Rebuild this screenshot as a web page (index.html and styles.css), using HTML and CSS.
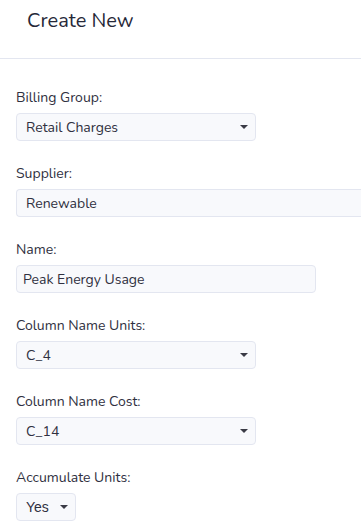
FILE: index.html
```html
<!DOCTYPE html>
<html lang="en">
<head>
  <meta charset="UTF-8">
  <title>Create New</title>
  <link rel="stylesheet" href="styles.css">
</head>
<body>
  <!-- Header -->
  <div class="modal-header">
    <h2 class="modal-title">Create New</h2>
  </div>

  <form class="modal-body">
    <div class="field">
      <label for="billingGroup">Billing Group:</label>
      <div class="select-wrap w-240">
        <select id="billingGroup">
          <option>Retail Charges</option>
        </select>
      </div>
    </div>

    <div class="field">
      <label for="supplier">Supplier:</label>
      <input type="text" id="supplier" class="input-wide" value="Renewable" readonly>
    </div>

    <div class="field">
      <label for="name">Name:</label>
      <input type="text" id="name" class="input-name" value="Peak Energy Usage">
    </div>

    <div class="field">
      <label for="colUnits">Column Name Units:</label>
      <div class="select-wrap w-240">
        <select id="colUnits">
          <option>C_4</option>
        </select>
      </div>
    </div>

    <div class="field">
      <label for="colCost">Column Name Cost:</label>
      <div class="select-wrap w-240">
        <select id="colCost">
          <option>C_14</option>
        </select>
      </div>
    </div>

    <div class="field">
      <label for="accumulate">Accumulate Units:</label>
      <div class="select-wrap w-60">
        <select id="accumulate" class="select-small">
          <option>Yes</option>
          <option>No</option>
        </select>
      </div>
    </div>
  </form>
</body>
</html>
```

FILE: styles.css
```css
body {
  font-family: "Nunito", "Lato", "Open Sans", sans-serif;
  color: #2f3040;
  margin: 0;
  overflow: hidden;
  background: #fff;
}
.modal-header {
  height: 58px;
  border-bottom: 1px solid #e3e6f0;
  padding: 0 27px;
}
.modal-title {
  margin: 0;
  padding-top: 8px;
  font-size: 20px;
  font-weight: 400;
  line-height: 26px;
  color: #262838;
}
.modal-body {
  padding: 29px 0 0 16px;
}
.field {
  margin-bottom: 23px;
}
label {
  display: block;
  font-size: 14px;
  line-height: 19px;
  margin-bottom: 6px;
}
input, select {
  font-family: inherit;
  font-size: 14px;
  color: #2f3040;
  background-color: #f8f9fc;
  border: 1px solid #e3e6f0;
  border-radius: 4px;
  height: 28px;
  box-sizing: border-box;
  outline: none;
}
input {
  padding: 0 6px;
}
.input-wide {
  width: 100%;
  padding-left: 9px;
  border-right: none;
  border-radius: 4px 0 0 4px;
}
.input-name {
  width: 300px;
}
.select-wrap {
  position: relative;
  height: 28px;
}
.select-wrap select {
  -webkit-appearance: none;
  appearance: none;
  width: 100%;
  padding: 0 24px 0 9px;
}
.select-wrap::after {
  content: "";
  position: absolute;
  top: 12px;
  right: 8px;
  border-left: 4px solid transparent;
  border-right: 4px solid transparent;
  border-top: 4px solid #3a3b45;
  pointer-events: none;
}
.w-240 {
  width: 240px;
}
.w-60 {
  width: 60px;
}
.select-small {
  font-family: "Liberation Sans", Arial, sans-serif;
  padding-left: 8px;
}
```
